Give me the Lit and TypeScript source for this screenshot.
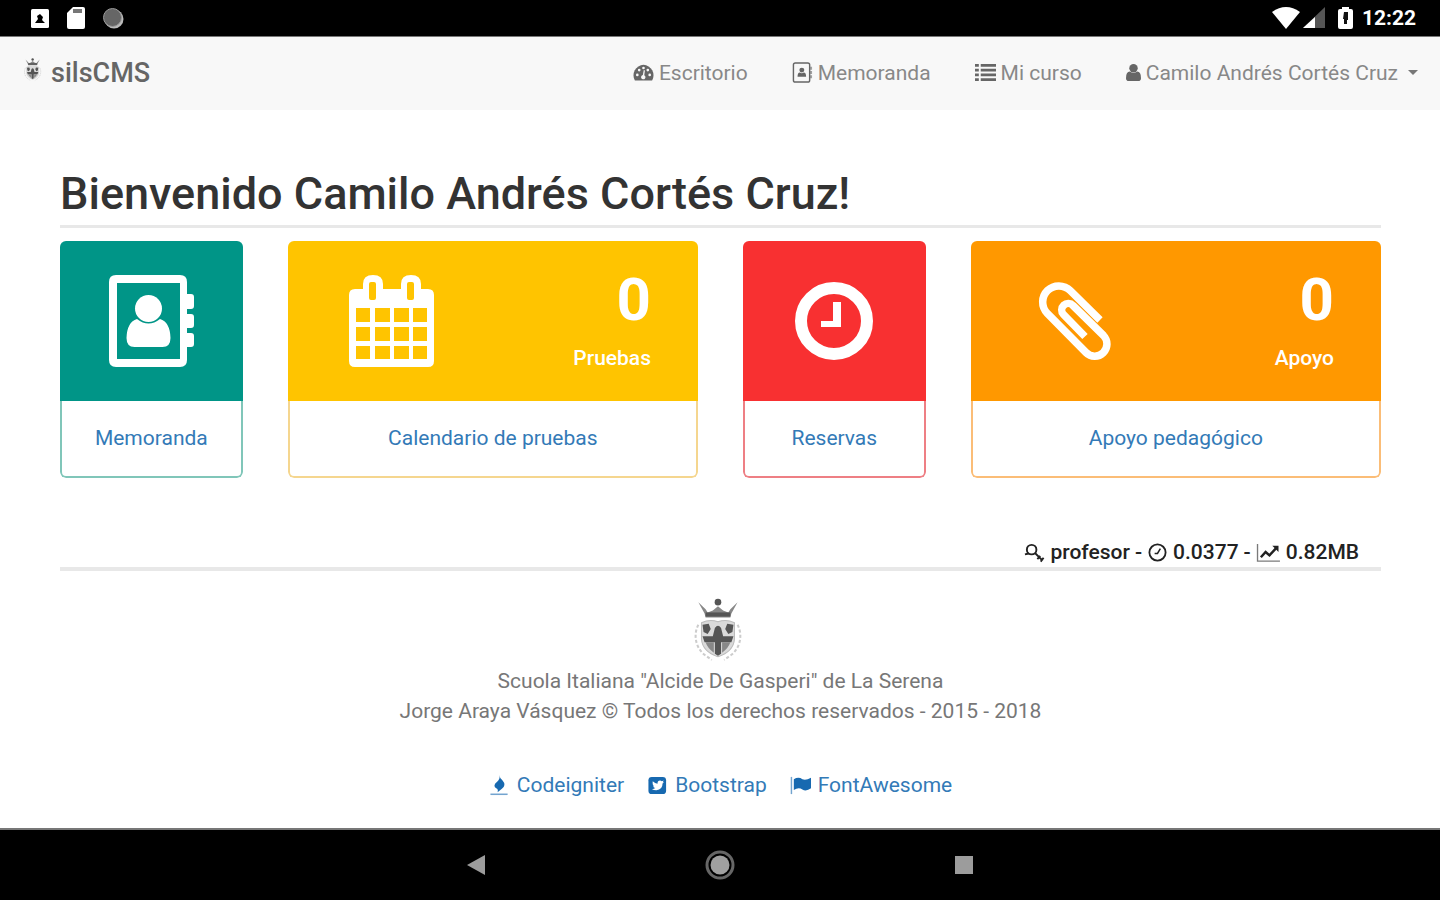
import { LitElement, html, css, svg } from "lit";
import { customElement } from "lit/decorators.js";

const crest = html`<svg class="crest" viewBox="0 0 48 64" aria-hidden="true">
  <g fill="#555">
    <circle cx="23" cy="4" r="3.2" />
    <path d="M4 4l7 7 2 3 5-2 5-4 5 4 5 2 2-3 7-7-6 11-1 4H11l-1-4z" fill="#888" />
    <path d="M11 14h24v4H11z" />
  </g>
  <path d="M4 26c-5 9-3 22 6 29l7 5M42 26c5 9 3 22-6 29l-7 5" fill="none" stroke="#ccc" stroke-width="2" stroke-dasharray="3 2" />
  <path d="M7 24q8-4 16-1q8-3 16 1v16q-1 12-16 17Q8 52 7 40z" fill="#dadada" stroke="#bbb" />
  <path d="M20 29q3-4 6 0l2 8h10l-2 6H26v11l-3 2-3-2V43H10l-2-6h10z" fill="#555" />
  <path d="M8 26l6-1 2 5-3 5-4-2zM38 26l-6-1-2 5 3 5 4-2z" fill="#555" />
  <path d="M11 43h8v10q-6-4-8-10zM35 43h-8v10q6-4 8-10z" fill="#888" />
</svg>`;

const small = (body: unknown) =>
  html`<svg class="ico" viewBox="0 0 22 22" aria-hidden="true">${body}</svg>`;

const icons = {
  gauge: small(svg`<path fill="currentColor" d="M11 3A11 11 0 0 0 2 19.500h18A11 11 0 0 0 11 3z"/><g fill="#f8f8f8"><circle cx="4.500" cy="13.500" r="1.400"/><circle cx="6.500" cy="8.500" r="1.400"/><circle cx="11" cy="6.300" r="1.400"/><circle cx="15.500" cy="8.500" r="1.400"/><circle cx="17.500" cy="13.500" r="1.400"/><path d="M11.300 8.500l1.200.3-.7 5a2.300 2.300 0 1 1-1.500-.2z"/></g>`),
  book: small(svg`<rect x="1.500" y="1" width="17" height="20" rx="2" fill="none" stroke="currentColor" stroke-width="1.500"/><path fill="currentColor" d="M19 5h2v3h-2zM19 9.500h2v3h-2zM19 14h2v3h-2z" opacity=".6"/><circle cx="10.300" cy="8.500" r="2.600" fill="currentColor"/><path fill="currentColor" d="M5.800 15.500q0-4.500 2.500-4.500 2 1.500 4 0 2.500 0 2.500 4.500z"/>`),
  list: small(svg`<path fill="currentColor" d="M0 2h4v3H0zM6 2h16v3H6zM0 7h4v3H0zM6 7h16v3H6zM0 12h4v3H0zM6 12h16v3H6zM0 17h4v3H0zM6 17h16v3H6z"/>`),
  user: html`<svg class="ico slim" viewBox="0 0 16 22" aria-hidden="true"><circle cx="8" cy="6.500" r="4.500" fill="currentColor"/><path fill="currentColor" d="M0 17q0-7 4-7 4 3 8 0 4 0 4 7 0 3-3 3H3q-3 0-3-3z"/></svg>`,
  key: small(svg`<g fill="none" stroke="currentColor" stroke-width="2"><circle cx="8" cy="8" r="5"/><path d="M5 12l-4 1M11.500 11.500l8 8M14 18l3-3.500M17.500 20.500l3-4"/></g>`),
  clock: small(svg`<circle cx="11" cy="11" r="8.500" fill="none" stroke="currentColor" stroke-width="1.900"/><path d="M14 7l-3 5H8" fill="none" stroke="currentColor" stroke-width="1.600"/>`),
  chart: html`<svg class="ico wide" viewBox="0 0 26 22" aria-hidden="true"><path d="M1.500 2v18H25" fill="none" stroke="currentColor" stroke-width="1.400" opacity=".6"/><path d="M5 16l5-5.500 4 3.500 7-7.500" fill="none" stroke="currentColor" stroke-width="2.600"/><path d="M17 4h6.500v6.500z" fill="currentColor"/></svg>`,
  fire: small(svg`<path fill="currentColor" d="M11 0q0 3 3 5.500 4.500 5-.5 9l-4.500 3.500q1-3-1.500-4-4-3 1-7Q12 4 11 0z"/><path stroke="currentColor" stroke-width="1.600" opacity=".6" d="M1.500 20.200h18"/>`),
  twitter: small(svg`<rect x="1.500" y="2" width="18.500" height="18" rx="3.500" fill="currentColor"/><path fill="#fff" d="M6 6.500q2.500 2.500 5 2.600 0-3.300 2.700-3.300 1 0 1.800.8l2-.8-1 1.900 1.300-.2-1.500 1.500q0 6.500-6.500 7-2.700 0-4.600-1.200 2.300 0 3.500-1.200-1.800-.3-2.300-1.800h1Q5.500 10.600 6 6.500z"/>`),
  flag: small(svg`<path stroke="currentColor" stroke-width="1.500" opacity=".6" d="M1.500 2v18"/><path fill="currentColor" d="M4 4.500q5-3 9 0 3.500 1.500 9-1.500v11q-5 3.500-9 1.200-4-2.700-9 .5z"/>`),
};

const big = {
  book: html`<svg class="glyph" width="85" height="92" viewBox="0 0 85 92" aria-hidden="true"><path fill="#fff" fill-rule="evenodd" d="M7 0h64q7 0 7 7v12h4q3 0 3 3v9q0 3-3 3h-4v5h4q3 0 3 3v8q0 3-3 3h-4v5h4q3 0 3 3v8q0 3-3 3h-4v13q0 7-7 7H7q-7 0-7-7V7q0-7 7-7zM8 8v76h63V8z"/><circle cx="39.500" cy="33.500" r="13.500" fill="#fff"/><path fill="#fff" d="M28 44q11.500 9 23 0 10 3 10.500 19 0 9-8 9h-28q-8 0-8-9Q18 47 28 44z"/></svg>`,
  calendar: html`<svg class="glyph" width="85" height="92" viewBox="0 0 85 92" aria-hidden="true"><path fill="#fff" fill-rule="evenodd" d="M6 14h8V9q0-9 10-9t10 9v5h18V9q0-9 10-9t10 9v5h7q6 0 6 6v66q0 6-6 6H6q-6 0-6-6V20q0-6 6-6zM22 7q-2 0-2 2v14q0 2 2 2h3q2 0 2-2V9q0-2-2-2zM60 7q-2 0-2 2v14q0 2 2 2h3q2 0 2-2V9q0-2-2-2zM7 33v14h14V33zM26 33v14h15V33zM45 33v14h15V33zM64 33v14h14V33zM7 52v14h14V52zM26 52v14h15V52zM45 52v14h15V52zM64 52v14h14V52zM7 71v13h14V71zM26 71v13h15V71zM45 71v13h15V71zM64 71v13h14V71z"/></svg>`,
  clock: html`<svg class="glyph" width="80" height="92" viewBox="0 0 80 92" aria-hidden="true"><circle cx="40" cy="46" r="33" fill="none" stroke="#fff" stroke-width="12"/><path fill="#fff" d="M39 27h8v25H27v-6h12z"/></svg>`,
  clip: html`<svg class="glyph" width="85" height="92" viewBox="-7 -7 85 92" aria-hidden="true"><path d="M61 38L31.300 8.700A16 16 0 0 0 8.300 31.300L47 70.500A12 12 0 0 0 64.500 53.500L34 23.500A6.500 6.500 0 0 0 24.500 32.500L46 54.500" fill="none" stroke="#fff" stroke-width="7.500"/></svg>`,
};

interface Tile {
  tone: string;
  icon: unknown;
  label: string;
  count?: number;
  unit?: string;
}

const tiles: Tile[] = [
  { tone: "teal", icon: big.book, label: "Memoranda" },
  { tone: "amber", icon: big.calendar, label: "Calendario de pruebas", count: 0, unit: "Pruebas" },
  { tone: "red", icon: big.clock, label: "Reservas" },
  { tone: "orange", icon: big.clip, label: "Apoyo pedagógico", count: 0, unit: "Apoyo" },
];

@customElement("app-root")
export class AppRoot extends LitElement {
  static styles = css`
    :host { display: flex; flex-direction: column; min-height: 100vh; background: #fff; color: #333; font: 21px/30px Roboto, sans-serif; }
    * { box-sizing: border-box; }
    a { color: #337ab7; text-decoration: none; }
    svg { display: block; flex: none; }
    .status { display: flex; justify-content: space-between; align-items: center; height: 37px; padding: 0 24px 0 30px; background: #000; color: #fff; border-bottom: 1px solid #777; }
    .tray { display: flex; align-items: center; gap: 16px; }
    .signals { display: flex; align-items: center; gap: 3px; }
    .time { margin-left: 6px; font-weight: 700; }
    .battery { margin-left: 10px; }
    .navbar { display: flex; justify-content: space-between; align-items: center; height: 73px; padding: 0 22px 2px 24px; background: #f8f8f8; }
    .brand { display: flex; align-items: center; gap: 9px; color: #666; font-size: 27px; font-weight: 500; }
    .brand .crest { width: 18px; height: 26px; margin-bottom: 6px; }
    .menu { display: flex; gap: 44px; }
    .menu a { display: flex; align-items: center; gap: 5px; color: #888; }
    .menu .ico { color: #666; }
    .ico { width: 21px; height: 21px; }
    .slim { width: 15px; }
    .wide { width: 25px; }
    .caret { margin-left: 5px; border: 5px solid transparent; border-top-color: #777; border-bottom: 0; }
    main { flex: 1; padding: 57px 59px 0 60px; }
    h1 { margin: 0; padding-bottom: 4px; border-bottom: 3px solid #e8e8e8; font-size: 45px; line-height: 54px; font-weight: 500; }
    .tiles { display: grid; grid-template-columns: repeat(12, 1fr); gap: 45px; margin-top: 13px; }
    .tile { grid-column: span 2; border-radius: 6px; overflow: hidden; }
    .counted { grid-column: span 4; }
    .teal { --tone: #009587; --line: #80c6b9; }
    .amber { --tone: #ffc400; --line: #f5d68f; }
    .red { --tone: #f83031; --line: #ee7f84; }
    .orange { --tone: #ff9800; --line: #fbbd77; }
    .head { display: flex; justify-content: center; height: 160px; padding: 34px 47px 0; background: var(--tone); color: #fff; }
    .counted .head { justify-content: space-between; }
    .counted .glyph { margin-left: 14px; }
    .figure { text-align: right; }
    .count { font-size: 60px; line-height: 50px; font-weight: 700; }
    .unit { margin-top: 18px; font-weight: 500; }
    .foot { display: flex; justify-content: center; align-items: center; height: 77px; padding-bottom: 2px; border: 2px solid var(--line); border-top: 0; border-radius: 0 0 6px 6px; background: #fff; }
    .stats { display: flex; justify-content: flex-end; align-items: center; gap: 5px; margin-top: 59px; padding-right: 22px; border-bottom: 4px solid #e8e8e8; color: #222; font-weight: 500; }
    .credits { display: flex; flex-direction: column; align-items: center; padding-top: 27px; color: #777; text-align: center; }
    .credits .crest { width: 50px; height: 66px; margin: 0 4px 2px 0; }
    .credits p { margin: 0; }
    .links { display: flex; gap: 23px; margin-top: 44px; }
    .links a { display: flex; align-items: center; gap: 7px; }
    .links .ico { color: #1769b0; }
    .keys { display: grid; grid-template-columns: 1fr auto 1fr; align-items: center; gap: 212px; height: 72px; background: #000; border-top: 2px solid #777; }
    .keys button { width: 32px; height: 32px; padding: 0; border: 0; background: none; }
    .keys button:first-child { justify-self: end; }
  `;

  render() {
    return html`
      <div class="status">
        <div class="tray">
          <svg width="20" height="22" viewBox="0 0 20 22" aria-hidden="true"><rect x="1" y="2" width="18" height="19" rx="1.500" fill="#fff"/><path d="M5 16l3-4-1-3 3-2 3 3-1 3 3 3z" fill="#000"/></svg>
          <svg width="20" height="24" viewBox="0 0 20 24" aria-hidden="true"><path d="M7 1h10q2 0 2 2v18q0 2-2 2H3q-2 0-2-2V7z" fill="#fff"/><path d="M7 3h9v4H7z" fill="#777"/></svg>
          <svg width="22" height="24" viewBox="0 0 22 24" aria-hidden="true"><circle cx="12" cy="13" r="9.500" fill="#bbb"/><circle cx="10.500" cy="11.500" r="9" fill="#666" stroke="#999"/></svg>
        </div>
        <div class="signals">
          <svg width="28" height="24" viewBox="0 0 28 24" aria-hidden="true"><path d="M0 6q14-10 28 0L14 23z" fill="#fff"/></svg>
          <svg width="22" height="22" viewBox="0 0 22 22" aria-hidden="true"><path d="M22 0v21H0z" fill="#555"/><path d="M12 10v11H0z" fill="#fff"/></svg>
          <svg class="battery" width="15" height="24" viewBox="0 0 15 24" aria-hidden="true"><path d="M4 1h7v2h2q2 0 2 2v16q0 2-2 2H2q-2 0-2-2V5q0-2 2-2h2z" fill="#fff"/><path d="M6 6h4v8H9v4H6v-5H5z" fill="#111"/></svg>
          <span class="time">12:22</span>
        </div>
      </div>
      <nav class="navbar">
        <a class="brand" href="#">${crest}<span>silsCMS</span></a>
        <div class="menu">
          <a href="#">${icons.gauge}<span>Escritorio</span></a>
          <a href="#">${icons.book}<span>Memoranda</span></a>
          <a href="#">${icons.list}<span>Mi curso</span></a>
          <a href="#">${icons.user}<span>Camilo Andrés Cortés Cruz</span><i class="caret"></i></a>
        </div>
      </nav>
      <main>
        <h1>Bienvenido Camilo Andrés Cortés Cruz!</h1>
        <section class="tiles">
          ${tiles.map((t) => html`
            <article class="tile ${t.tone} ${t.unit ? "counted" : ""}">
              <div class="head">
                ${t.icon}
                ${t.unit ? html`<div class="figure"><div class="count">${t.count}</div><div class="unit">${t.unit}</div></div>` : ""}
              </div>
              <div class="foot"><a href="#">${t.label}</a></div>
            </article>`)}
        </section>
        <div class="stats">
          ${icons.key}<span>profesor</span><span>-</span>${icons.clock}<span>0.0377</span><span>-</span>${icons.chart}<span>0.82MB</span>
        </div>
        <footer class="credits">
          ${crest}
          <p>Scuola Italiana "Alcide De Gasperi" de La Serena</p>
          <p>Jorge Araya Vásquez © Todos los derechos reservados - 2015 - 2018</p>
          <div class="links">
            <a href="#">${icons.fire}<span>Codeigniter</span></a>
            <a href="#">${icons.twitter}<span>Bootstrap</span></a>
            <a href="#">${icons.flag}<span>FontAwesome</span></a>
          </div>
        </footer>
      </main>
      <div class="keys">
        <button aria-label="Atrás"><svg width="32" height="32" viewBox="0 0 32 32"><path d="M7 16L25 6v20z" fill="#9c9c9c"/></svg></button>
        <button aria-label="Inicio"><svg width="32" height="32" viewBox="0 0 32 32"><circle cx="16" cy="16" r="13" fill="none" stroke="#666" stroke-width="3"/><circle cx="16" cy="16" r="9.500" fill="#a0a0a0"/></svg></button>
        <button aria-label="Recientes"><svg width="32" height="32" viewBox="0 0 32 32"><path d="M7 7h18v18H7z" fill="#9c9c9c"/></svg></button>
      </div>
    `;
  }
}
